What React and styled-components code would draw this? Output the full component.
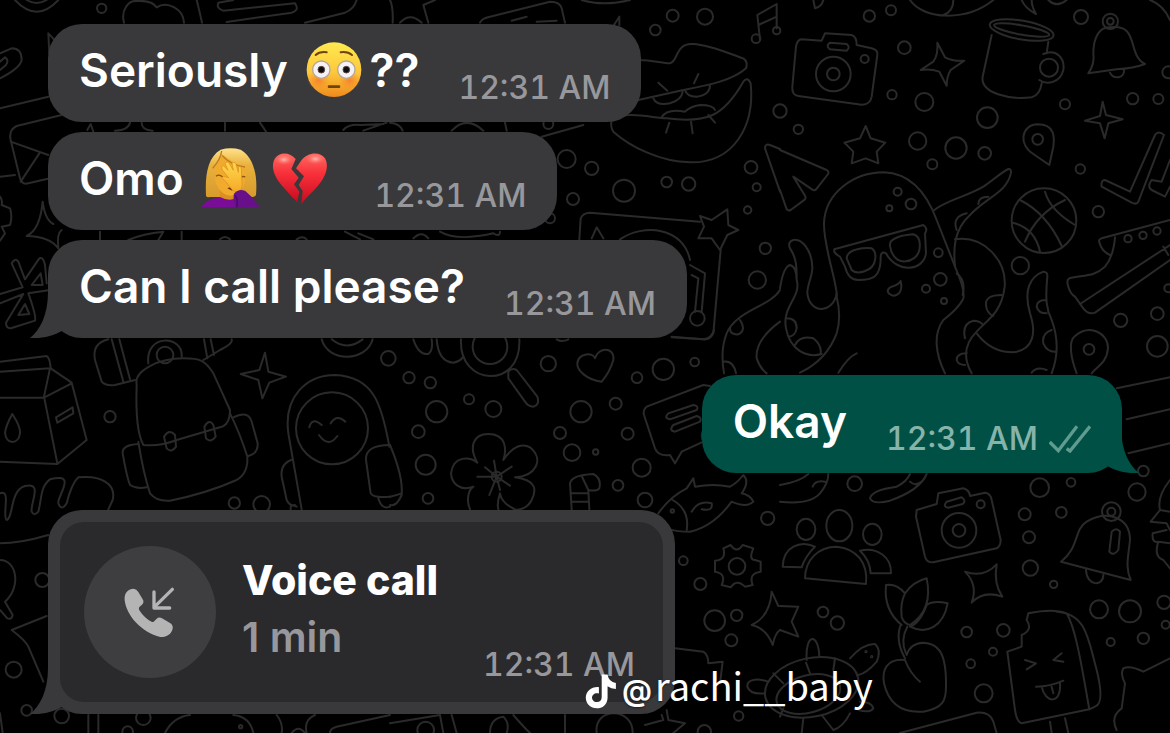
import React from "react";
import styled, { createGlobalStyle } from "styled-components";

const GlobalStyle = createGlobalStyle`
  * { box-sizing: border-box; }
  body { margin: 0; background: #000; }
`;

const sans = `Inter, "Liberation Sans", sans-serif`;

const Screen = styled.main`
  position: relative;
  min-height: 100vh;
  overflow: hidden;
  background: #000;
  font-family: ${sans};
`;

const Wallpaper = styled.svg`
  position: absolute;
  inset: 0;
  width: 100%;
  height: 100%;
  fill: none;
  stroke: #2a2a2a;
  stroke-width: 6;
  stroke-linecap: round;
  stroke-linejoin: round;
`;

const Thread = styled.div`
  position: relative;
  display: flex;
  flex-direction: column;
  gap: 37px;
  padding: 24px 48px 16px;
`;

const Group = styled.section`
  display: flex;
  flex-direction: column;
  align-items: ${(p) => (p.$sent ? "flex-end" : "flex-start")};
  gap: 10px;
`;

const Bubble = styled.article`
  position: relative;
  display: flex;
  gap: 39px;
  max-width: 100%;
  padding: 17px 31px 15px;
  border-radius: 34px;
  background: ${(p) => (p.$sent ? "#005045" : "#39393b")};
  color: ${(p) => (p.$sent ? "#86b3aa" : "#98989c")};
`;

const CallBubble = styled(Bubble)`
  width: 627px;
  padding: 12px;
`;

const Message = styled.p`
  margin: 0;
  min-height: 66px;
  color: #fff;
  font-size: 46px;
  font-weight: 600;
  line-height: 58px;
  white-space: nowrap;
`;

const Meta = styled.div`
  display: flex;
  align-items: center;
  align-self: flex-end;
  gap: 11px;
  margin-left: auto;
`;

const Time = styled.time`
  font-size: 32px;
  font-weight: 500;
  font-variant-numeric: tabular-nums;
  line-height: 38px;
  white-space: nowrap;
`;

const TailShape = styled.svg`
  position: absolute;
  bottom: 0;
  ${(p) => (p.$sent ? "right: -17px; transform: scaleX(-1);" : "left: -18px;")}
  width: 36px;
  height: 50px;
  fill: ${(p) => (p.$sent ? "#005045" : "#39393b")};
`;

const Glyph = styled.svg`
  width: 56px;
  height: 56px;
  margin: 0 7px;
  overflow: visible;
  vertical-align: -11px;
`;

const Ticks = styled.svg`
  width: 42px;
  height: 28px;
  fill: none;
  stroke: #5f9b8f;
  stroke-width: 10;
`;

const CallCard = styled.div`
  position: relative;
  display: flex;
  flex: 1;
  gap: 26px;
  min-height: 180px;
  padding: 24px 28px 18px 24px;
  border-radius: 24px;
  background: #2a2a2c;
`;

const CallBadge = styled.div`
  flex: none;
  width: 132px;
  height: 132px;
  border-radius: 50%;
  background: #3e3e40;
`;

const CallText = styled.div`
  display: flex;
  flex-direction: column;
  gap: 7px;
  padding-top: 9px;
  white-space: nowrap;
`;

const CallTitle = styled.h2`
  margin: 0;
  color: #fff;
  font-size: 41px;
  font-weight: 800;
  line-height: 50px;
`;

const CallLength = styled.p`
  margin: 0;
  font-size: 41px;
  font-weight: 600;
  line-height: 50px;
`;

const Watermark = styled.div`
  position: absolute;
  left: 50%;
  bottom: 15px;
  display: flex;
  align-items: center;
  gap: 5px;
  color: #fff;
  font-family: "Noto Sans CJK SC", "Noto Sans", sans-serif;
  font-size: 38px;
  line-height: 56px;
  white-space: nowrap;
  text-shadow: 0 1px 2px rgba(0, 0, 0, 0.5);
`;

const At = styled.span`
  margin-right: 3px;
  font-family: ${sans};
  font-size: 30px;
  font-weight: 600;
`;

const TikTok = styled.svg`
  width: 32px;
  height: 36px;
  margin-top: 6px;
  fill: #fff;
`;

/* Wallpaper doodles: each tile has its origin, its circles [x, y, r] and its outlines. */
const tiles = [
  {
    x: 0,
    y: 0,
    circles: [[305, 25, 14]],
    paths: [
      "M45 0Q110 70 175 0M80 0Q110 18 140 0",
      "M372 68C362 30 385 0 412 3Q455 0 470 22C500 2 550 25 552 68",
      "M590 0Q600 40 606 68",
      "M885 10Q900 30 875 38L680 66M885 10L670 32Q648 25 655 8L700 0",
      "M915 68L1035 38Q1062 28 1070 0",
      "M0 160L35 145Q65 145 65 180Q60 205 0 235M0 185L15 172Q28 180 18 195L0 210",
      "M168 125L145 100L148 160M0 325L145 290",
      "M185 345L50 378Q25 390 32 420L60 535Q65 555 85 550L150 535M32 425L145 465M62 545L118 460M0 530L45 525",
      "M262 390L272 372L280 395M345 392Q385 390 390 368M425 368Q425 390 458 392M675 368V392M780 368L798 395M1030 390Q1045 372 1080 375L1150 372M1090 392L1160 368",
      "M0 590Q8 600 5 615L30 625Q38 650 30 675L5 680L15 700L0 722",
      "M160 672Q135 660 128 605Q120 690 80 708Q150 710 175 745Q170 700 185 690",
      "M300 695V720M385 720Q430 700 490 695L475 720M545 695V718M660 718q15-14 30 0M890 718q18-12 30 0M1035 695L1080 718M1075 700L1120 718",
      "M0 882L68 862L35 790Q45 772 55 785L75 838L118 775Q130 770 135 795L140 850M0 910L70 882L18 968Q18 988 35 984L105 962Q110 950 85 880L150 870M95 855L122 820L128 855ZM55 945L75 912L88 942Z",
    ],
  },
  {
    x: 390,
    y: 0,
    circles: [[848, 47, 18], [945, 50, 24], [796, 90, 16], [530, 477, 27], [605, 505, 20], [702, 572, 33], [549, 597, 18], [830, 546, 16], [896, 552, 20], [1083, 502, 19], [1100, 562, 12], [1073, 630, 11], [1126, 745, 17], [1102, 840, 26], [480, 655, 15], [475, 372, 15], [922, 955, 22], [1098, 116, 13], [1160, 92, 11]],
    paths: [
      "M8 68Q10 20 0 0M30 68Q60 35 95 68M115 68L100 15L135 0",
      "M270 68Q275 55 300 50L480 5Q510 5 515 25L525 68M365 62L410 50M440 65L500 62M575 0Q640 20 720 0M670 78L688 50V75",
      "M1110 118L1102 45L1160 12V85M1105 75L1160 50",
      "M745 180C790 180 815 190 840 190C865 185 855 128 910 132C960 135 1010 158 1060 175Q1075 185 1068 205C1030 240 960 255 880 270L745 300",
      "M790 295Q800 318 840 310Q875 300 878 275M885 270Q890 290 920 290Q960 285 960 255M805 248L832 272M925 222L912 250",
      "M665 360C710 330 790 355 830 355C950 370 1000 350 1060 245Q1072 228 1082 250C1095 380 1030 490 900 487C810 485 720 440 670 395Q660 380 665 360M815 352Q830 325 885 335Q900 320 930 315Q970 315 975 330M838 368L828 398M903 365L908 400M955 345L975 368",
      "M455 410L580 375M185 392Q230 345 280 392M0 368Q30 370 38 392M345 368L350 392",
      "M1170 575L1125 445Q1125 430 1140 435L1170 447",
      "M568 718L572 655Q580 638 600 638L930 665M605 715L620 682L640 715M690 718C760 670 880 680 900 780M992 750L970 1000Q960 1020 940 1018L845 1010M900 795L945 820L935 935M905 825L925 835L915 935",
      "M930 648L965 660L1012 628L1015 675L1045 690L1012 705L990 750L965 715L925 715L942 680Z",
      "M150 695Q200 725 310 700Q330 712 330 695M70 715q25-25 45 0",
      "M1170 870C1140 920 1040 930 1010 1000Q990 1050 1002 1120M1020 985Q1020 1005 1045 1003Q1070 990 1050 960M1170 965Q1095 1020 1100 1075Q1110 1105 1130 1120M1000 1085Q1030 1080 1038 1120",
    ],
  },
  {
    x: 780,
    y: 0,
    circles: [[268, 48, 17], [333, 31, 15], [373, 143, 19], [336, 284, 14], [433, 306, 27], [622, 353, 31], [413, 423, 26], [528, 444, 32], [614, 460, 19], [457, 493, 15], [55, 388, 14], [0, 333, 20], [353, 575, 12], [393, 612, 16], [328, 625, 9], [475, 758, 13], [481, 838, 19], [438, 866, 12], [492, 903, 9], [903, 51, 21], [855, 313, 15], [1058, 296, 17], [1135, 297, 15], [1165, 217, 18], [901, 507, 14], [955, 635, 17], [721, 797, 26], [1022, 961, 20], [1132, 941, 19], [1132, 1039, 31], [1165, 865, 12], [792, 662, 97], [160, 222, 52], [160, 222, 19], [254, 177, 12], [991, 64, 23], [991, 64, 10], [773, 418, 16], [927, 1048, 16], [807, 203, 27], [1044, 716, 11], [1089, 706, 11], [1131, 693, 11]],
    ellipses: [[725, 90, 97, 28, 10], [725, 90, 84, 14, 10]],
    paths: [
      "M100 0L105 25Q125 20 130 0M390 0C430 60 560 65 640 0M520 0Q520 35 490 45M725 0Q735 25 768 42Q755 20 755 0M805 0Q830 25 860 0M1110 0Q1150 15 1170 60",
      "M65 118L125 122L135 100L215 105Q230 110 230 135L275 145Q295 150 292 165L275 290Q270 315 245 314L55 288Q35 285 37 260L48 140Q52 118 65 118ZM150 128L200 132Q212 142 200 152L150 148Q136 138 150 128Z",
      "M472 128L495 172Q520 185 553 182L512 210Q500 230 500 257L478 215Q450 205 422 210L460 185Q475 165 472 128Z",
      "M635 105L608 230C600 280 690 300 755 292Q780 285 785 250M805 125L800 160M790 162C830 145 855 175 850 210C840 250 800 255 778 240",
      "M925 220Q945 190 940 160C940 110 960 80 990 82C1080 70 1040 165 1095 192Q1060 205 1010 208ZM990 218C1000 240 1035 235 1032 210",
      "M968 305L978 345L1028 358L985 370L974 415L960 370L915 362L960 348Z",
      "M257 378L272 415L316 428L290 455L295 490L257 475L215 490L220 455L193 428L240 415Z",
      "M0 450L140 510Q150 516 142 525L110 566Q104 575 96 568L40 530L75 587Q80 596 70 602L32 630Q22 635 18 622L0 570",
      "M808 495L760 462C715 435 722 375 773 373C830 373 822 420 820 440Z",
      "M965 560Q962 540 975 540L1050 575L1125 405Q1135 390 1152 405L1075 605Q1070 615 1055 608ZM1170 480L1145 545L1115 540Q1100 560 1115 570L1155 590L1170 560",
      "M170 890C175 860 130 740 132 670C135 580 220 517 312 517C390 520 440 580 470 660L525 800Q560 880 548 900Q530 930 490 960C460 1000 465 1060 495 1120M170 890Q185 950 170 1000Q140 1080 60 1118",
      "M170 880C160 940 90 945 82 880C82 850 98 830 97 800C95 750 65 715 40 720Q22 725 30 745C50 775 50 800 50 840C65 890 5 920 18 985C30 1050 80 1075 125 1062M0 865Q10 800 30 795Q50 800 50 840M20 955Q50 955 50 985Q45 1010 25 1010M45 1035Q60 1005 100 1015Q125 1035 122 1060",
      "M463 630C500 600 560 590 610 560C640 540 660 520 685 507Q694 506 693 518C680 580 620 590 570 645C520 690 520 750 525 800M525 718C610 705 680 780 674 860C665 940 620 960 590 995Q535 1050 575 1120",
      "M530 690Q515 650 560 640M595 612Q595 590 625 590M530 820Q558 840 548 885M665 885Q615 885 618 915Q620 940 640 948M555 1015Q545 970 580 962Q600 962 610 975M560 1060Q530 1060 530 1080Q535 1095 555 1095",
      "M590 1000C620 1040 660 1057 700 1057C760 1050 770 1000 750 940C730 870 750 830 790 815Q803 815 802 830C795 900 800 930 815 960Q845 1040 815 1120M798 900Q770 900 770 920Q775 940 800 940M815 990Q785 1000 790 1030Q800 1055 825 1055M175 1118Q205 1070 230 1060M755 1118Q770 1098 800 1110",
      "M163 748L430 675Q445 685 435 700L438 760C430 815 350 820 318 760Q300 750 302 780C300 830 280 840 235 840Q205 840 195 800L180 770Q160 760 163 748M200 775C200 745 260 742 275 745Q290 755 285 780C280 815 230 825 215 810ZM330 738C325 710 380 705 400 703Q425 710 418 750C410 790 340 805 330 738Z",
      "M362 843C370 880 350 887 340 887C315 880 322 865 335 860Q355 855 362 843",
      "M720 600Q800 640 845 738M795 575Q810 630 885 675M855 600Q770 640 735 725M698 668Q765 685 780 755",
      "M1170 660L965 715Q955 718 958 727Q965 755 990 765M1005 712Q1000 770 975 800C945 830 910 825 868 835Q858 840 865 860Q870 880 885 890L910 925Q925 945 945 938L1170 780M900 912L1170 735M1150 740L1165 765",
      "M890 1120C875 1080 862 1025 885 1008C930 970 985 1000 984 1045C980 1090 950 1100 935 1120",
    ],
  },
  {
    x: 0,
    y: 330,
    circles: [[330, 260, 17], [703, 519, 17], [785, 523, 25], [127, 750, 21], [41, 1019, 24], [80, 1141, 16], [185, 1158, 22], [430, 1163, 22], [996, 295, 108], [1165, 85, 22], [495, 75, 25], [383, 1205, 16], [722, 1190, 5]],
    paths: [
      "M0 95L140 78Q150 85 152 115L215 158L260 330L172 402L0 395M0 125L150 115L132 200L172 400M0 203L132 203L215 160M37 252Q62 290 60 310C55 345 18 345 15 308Q18 285 37 252M168 262L218 232L220 250L172 278Z",
      "M410 165C400 120 480 85 550 85C600 85 615 90 640 130L690 240Q690 285 660 292L530 330Q480 350 430 345Q405 300 410 165M415 335Q430 430 450 490Q470 515 510 512Q620 490 710 450Q745 430 742 380Q720 310 690 250",
      "M415 342Q365 345 368 370Q380 440 390 465Q410 478 440 472M700 262Q745 240 755 275L773 340Q775 370 745 378M492 320Q508 295 525 315L528 350Q515 370 500 355ZM613 290Q628 265 640 285L647 320Q632 340 618 325ZM445 100C435 10 550 15 545 80",
      "M325 28Q275 40 285 90L305 155Q315 168 345 165L405 150M335 28L370 155M358 28L390 148M612 28L622 85M632 28L642 75M695 28Q700 40 660 60L610 90",
      "M795 68L805 125L858 140L808 158L787 205L775 150L722 132L778 120Z",
      "M965 28C985 100 1100 95 1118 28M995 28Q1040 65 1088 28",
      "M905 538L865 310C850 200 920 135 1005 135C1120 140 1145 220 1168 350M928 292Q935 260 965 285M992 280Q1010 250 1036 275M957 315Q985 355 1012 318M878 388Q840 400 845 440L860 510Q870 530 885 525M872 538Q870 520 890 530M1170 345Q1095 345 1098 390L1112 490Q1120 505 1170 500M1135 505Q1145 540 1170 530",
      "M0 490C35 475 5 560 20 570C40 565 30 480 75 468C130 455 90 520 95 545Q102 560 115 545C125 510 120 470 150 448C235 425 170 500 175 520Q185 545 200 520Q215 460 235 442C300 435 350 460 338 510L325 538",
      "M0 640Q60 640 145 615M0 690C50 690 65 770 15 815L38 855Q35 870 22 865L0 840M140 858L35 900Q75 930 85 950L130 1055",
      "M0 1150L8 1209M265 1155V1209M295 1155V1209M495 1209Q520 1160 570 1155M700 1155Q750 1160 760 1209M830 1155Q850 1180 845 1209M945 1155Q910 1170 920 1209M875 1209q20-25 40 0M990 1209Q990 1195 1010 1190L1170 1155",
    ],
  },
  {
    x: 390,
    y: 330,
    circles: [[57, 143, 17], [121, 158, 17], [237, 208, 15], [140, 245, 32], [310, 237, 24], [85, 305, 19], [107, 404, 30], [114, 505, 16], [475, 101, 23], [741, 143, 16], [820, 118, 32], [914, 96, 13], [573, 245, 32], [677, 221, 18], [510, 309, 18], [713, 311, 18], [546, 368, 25], [617, 366, 8], [755, 413, 27], [684, 466, 16], [765, 510, 22], [1133, 565, 20], [880, 692, 13], [931, 762, 18], [1041, 709, 25], [974, 872, 31], [1040, 856, 17], [1024, 931, 18], [1046, 1158, 14], [300, 50, 52], [847, 543, 5], [107, 1200, 25], [943, 1205, 20], [320, 440, 15]],
    paths: [
      "M213 28C205 170 395 180 388 28M355 125Q365 112 380 120L442 200Q450 225 430 230Q415 230 405 215L355 145ZM140 28Q145 95 190 98Q210 95 220 80M70 28Q85 75 115 72Q130 60 125 28",
      "M635 155C590 150 560 120 562 100C565 70 610 65 615 85C625 50 675 50 670 90Q660 125 635 155M500 28Q515 38 535 28M845 22L940 28Q965 25 972 0",
      "M960 168L940 165L770 230Q758 240 762 255L795 355Q805 380 840 375L855 400L875 365L940 335M835 250L910 225Q928 228 920 240L840 268Q820 265 835 250ZM850 285L920 258Q937 262 930 275L855 305Q835 302 850 285ZM940 300Q930 315 940 335",
      "M240 538C228 510 235 480 250 470C210 485 185 460 183 430C190 375 240 380 262 398C235 350 250 312 295 312C350 312 350 360 340 390C370 345 400 340 420 352C465 390 435 440 375 442C440 450 440 480 425 510C410 540 380 540 375 538Q335 520 330 490Q320 520 325 538",
      "M320 440H262M320 440L365 410M320 440L312 392M320 440L360 467M320 440L298 495M320 440L330 480M320 440L285 412",
      "M545 538L540 460Q545 435 610 432Q635 445 628 475Q620 485 595 480L598 538M545 490H595M545 515H595M575 438L595 480",
      "M805 550Q840 500 890 475L910 445L915 470Q970 460 1020 470Q1040 460 1060 435Q1080 455 1055 490Q1080 495 1090 515Q1070 535 1025 515Q970 590 900 605Q860 605 840 598M848 510Q900 540 890 600M905 545Q925 510 965 520Q970 545 935 538",
      "M1000 655L1022 645Q1040 672 1058 645L1090 655Q1075 690 1095 690L1112 695V725Q1075 730 1088 765L1065 770Q1040 745 1022 772L995 765Q1010 730 975 725V692Q1010 690 1000 655Z",
      "M1165 828L1145 785Q1140 860 1085 885Q1130 895 1148 945Q1155 910 1170 900M855 955L940 965Q955 975 955 1000L998 995L990 1060",
      "M1135 1055C1090 1040 1070 1055 1072 1070Q1080 1095 1125 1090",
      "M0 1180L150 1155L160 1209M185 1155L200 1209M300 1209Q300 1165 340 1160Q360 1180 350 1209M370 1155Q400 1190 420 1209M525 1155V1209M620 1209C610 1130 730 1130 728 1209M815 1155L820 1170L765 1185M830 1140L835 1170L885 1180L850 1209",
      "M0 345Q40 440 35 495Q20 530 0 525M0 500Q20 495 35 490",
    ],
  },
  {
    x: 780,
    y: 330,
    circles: [[224, 461, 22], [779, 473, 28], [873, 457, 13], [1071, 486, 26], [1090, 423, 16], [734, 553, 18], [844, 547, 16], [747, 622, 18], [751, 714, 23], [821, 763, 11], [602, 523, 12], [537, 601, 52], [537, 601, 19], [994, 545, 28], [994, 545, 12], [957, 838, 27], [1050, 844, 33], [1152, 817, 20], [1157, 884, 12], [1090, 925, 17], [992, 936, 12], [129, 846, 16], [172, 879, 20], [560, 906, 16], [670, 901, 19], [639, 965, 12], [572, 1001, 13], [611, 1090, 27], [258, 965, 2], [275, 980, 2]],
    ellipses: [[78, 598, 28, 32, 0], [178, 587, 39, 47, 0], [277, 613, 28, 32, 0], [95, 1072, 142, 88, -12], [85, 1092, 98, 56, -15]],
    paths: [
      "M1010 175L1170 142M1040 268L1170 238M1045 370L1170 340",
      "M0 515Q90 525 120 490Q145 460 145 432M0 465Q60 455 85 432M98 470Q105 450 135 455M270 505Q275 480 350 470Q380 455 390 432M270 505Q280 525 330 512Q420 480 440 432M390 455Q405 470 425 455",
      "M75 745C75 690 115 650 170 650C230 655 265 700 258 762ZM65 712L8 710C10 650 60 630 105 650Q75 680 65 712M240 662C290 650 335 680 333 730L272 730Q270 690 240 662",
      "M410 540L470 522L475 490L550 475Q568 480 570 498L615 488Q632 490 635 510L662 630Q662 648 650 655L460 697Q440 698 435 680L408 560ZM500 515L545 502Q560 512 548 522L505 533Q487 530 500 515",
      "M843 695C900 650 880 600 920 575C980 540 1050 560 1050 630C1045 680 1035 710 1052 750ZM918 720C920 770 970 770 970 735M995 605Q1010 590 1020 605L1015 660Q1000 680 988 665Z",
      "M1170 450Q1130 500 1140 540L1170 545M1140 540L1112 575L1160 580L1170 600M1160 600L1118 610Q1115 640 1135 635L1170 640M1135 635Q1120 680 1150 690L1170 715",
      "M650 703Q640 760 667 800Q610 780 575 818Q595 765 555 725Q610 745 650 703",
      "M365 885Q310 840 318 765Q350 760 375 790Q400 755 440 745Q460 840 390 885Q370 880 365 860Q360 820 375 790M440 825Q460 810 503 820C490 890 440 915 390 890Q420 880 440 825M362 885Q345 930 375 985M382 890Q360 930 378 970",
      "M420 1055Q390 1030 375 990C320 985 305 1020 312 1060C330 1140 390 1148 430 1145C490 1135 498 1110 498 1070C500 960 470 940 430 938Q390 940 380 975",
      "M0 828L55 830L35 875L55 920L0 900",
      "M745 850Q820 835 860 850C890 900 910 1040 928 1138L725 1180Q710 1175 705 1140L682 965L725 950V915Q760 900 740 870ZM830 845C920 850 925 930 950 1020Q975 1120 945 1130L928 1138M810 1175L815 1209M855 1165L865 1209M735 990L768 1000L740 1018M845 970L820 990L850 995M768 1070Q810 1070 850 1052M785 1070C795 1120 845 1125 840 1060M815 1070L820 1090",
      "M1170 985L1090 1025Q1050 1005 1030 1015Q1020 1030 1035 1060L1025 1135Q990 1160 1010 1200",
      "M210 985Q250 940 285 942Q305 960 290 995Q260 1030 235 1035M80 990C75 910 115 905 118 980M78 998L90 1030M165 985L160 1020M70 1165L65 1209M125 1155L160 1200Q190 1190 210 1150M240 1115Q275 1115 280 1135Q270 1150 235 1140M-20 1030L10 1060M0 1160L10 1135",
      "M360 1209L590 1148Q630 1145 640 1175L650 1209",
    ],
  },
];

const Doodles = () => (
  <Wallpaper viewBox="0 0 1170 733" preserveAspectRatio="xMidYMid slice" aria-hidden="true">
    {tiles.map((tile, i) => (
      <g key={i} transform={`translate(${tile.x} ${tile.y}) scale(${1 / 3})`}>
        {tile.circles.map(([cx, cy, r], k) => (
          <circle key={k} cx={cx} cy={cy} r={r} />
        ))}
        {(tile.ellipses || []).map(([cx, cy, rx, ry, a], k) => (
          <ellipse key={k} cx={cx} cy={cy} rx={rx} ry={ry} transform={`rotate(${a} ${cx} ${cy})`} />
        ))}
        {tile.paths.map((d, k) => (
          <path key={k} d={d} />
        ))}
      </g>
    ))}
  </Wallpaper>
);

const Tail = ({ sent }) => (
  <TailShape $sent={sent} viewBox="0 0 36 50" aria-hidden="true">
    <path d="M18 4C18 27 10 42 0 50C14 51 26 47 35 41L35 4Z" />
  </TailShape>
);

const FlushedFace = () => (
  <Glyph viewBox="349 35 168 168" role="img" aria-label="😳">
    <defs>
      <linearGradient id="skin" x1="0" y1="0" x2="0" y2="1">
        <stop offset="0" stopColor="#ffe94f" />
        <stop offset="0.55" stopColor="#fdc83c" />
        <stop offset="1" stopColor="#ee8a1c" />
      </linearGradient>
      <radialGradient id="blush">
        <stop offset="0" stopColor="#f4612a" stopOpacity="0.6" />
        <stop offset="1" stopColor="#f4812a" stopOpacity="0" />
      </radialGradient>
    </defs>
    <circle cx="433" cy="118" r="82" fill="url(#skin)" />
    <ellipse cx="386" cy="150" rx="34" ry="28" fill="url(#blush)" />
    <ellipse cx="480" cy="150" rx="34" ry="28" fill="url(#blush)" />
    <g fill="#f4f2f4" stroke="#b5a59b" strokeWidth="4">
      <circle cx="395" cy="118" r="26" />
      <circle cx="470" cy="118" r="26" />
    </g>
    <g fill="#120c0c" stroke="#574a48" strokeWidth="3">
      <circle cx="395" cy="118" r="10" />
      <circle cx="470" cy="118" r="10" />
    </g>
    <g fill="none" stroke="#70440f" strokeWidth="6" strokeLinecap="round">
      <path d="M378 74Q390 63 411 66M453 66Q474 63 487 74" />
      <path d="M418 169H448" strokeWidth="8" />
    </g>
  </Glyph>
);

const Facepalm = () => (
  <Glyph viewBox="36 363 168 168" role="img" aria-label="🤦‍♀️">
    <defs>
      <linearGradient id="hair" x1="0" y1="0" x2="0" y2="1">
        <stop offset="0" stopColor="#ffe28a" />
        <stop offset="0.35" stopColor="#e9b13c" />
        <stop offset="1" stopColor="#d79a2c" />
      </linearGradient>
      <linearGradient id="hand" x1="0" y1="0" x2="0" y2="1">
        <stop offset="0" stopColor="#ffd84e" />
        <stop offset="1" stopColor="#f5a927" />
      </linearGradient>
    </defs>
    <path d="M48 500C45 440 52 385 92 362Q122 354 152 362C192 385 203 440 198 498Q195 505 180 504H60Q50 506 48 500Z" fill="url(#hair)" />
    <path d="M90 475H150V520H90Z" fill="#dd8e20" />
    <path d="M94 375C75 405 70 440 78 465Q95 500 122 500C155 495 172 460 168 420Q145 410 94 375Z" fill="#f0aa2e" />
    <path d="M95 366Q92 390 68 418M97 380Q120 408 165 414" fill="none" stroke="#b97b20" strokeWidth="4" />
    <path d="M78 442Q87 434 98 444M152 446Q158 440 166 444" fill="none" stroke="#8a5312" strokeWidth="4" />
    <path d="M112 478Q122 470 128 486" fill="#70300c" />
    <path d="M34 535Q45 512 90 504Q120 520 145 504Q200 512 207 535Z" fill="#7a0d98" />
    <path d="M98 424Q92 410 100 410L114 424L106 404Q112 394 118 404L130 424L126 402Q134 396 138 406L145 430L146 412Q154 410 154 420L156 462Q158 480 146 488L130 486Q112 464 108 458Q92 446 100 442L116 446Z" fill="url(#hand)" stroke="#d98c1e" strokeWidth="2" />
    <path d="M132 494Q146 478 166 486Q195 510 207 535H136Q128 515 132 494Z" fill="#68108a" />
    <path d="M140 535Q146 512 134 498" fill="none" stroke="#490868" strokeWidth="4" />
  </Glyph>
);

const BrokenHeart = () => (
  <Glyph viewBox="246 363 168 168" role="img" aria-label="💔">
    <defs>
      <linearGradient id="heart" x1="0" y1="0" x2="0" y2="1">
        <stop offset="0" stopColor="#ff6a62" />
        <stop offset="0.4" stopColor="#f8303a" />
        <stop offset="1" stopColor="#c80b20" />
      </linearGradient>
      <radialGradient id="shine">
        <stop offset="0" stopColor="#ffc9bd" stopOpacity="0.85" />
        <stop offset="1" stopColor="#ff7a70" stopOpacity="0" />
      </radialGradient>
    </defs>
    <path d="M317 390C300 368 268 368 255 388C237 420 262 456 285 480Q302 500 321 519L328 488L312 466L326 446L304 420Z" fill="url(#heart)" />
    <path d="M333 396C350 370 390 365 405 388C422 420 398 458 372 484Q352 502 334 525L338 486L326 468L342 442L318 418Z" fill="url(#heart)" />
    <ellipse cx="282" cy="392" rx="26" ry="16" fill="url(#shine)" />
    <ellipse cx="376" cy="390" rx="28" ry="16" fill="url(#shine)" />
  </Glyph>
);

const App = () => (
  <Screen>
    <GlobalStyle />
    <Doodles />
    <Thread>
      <Group>
        <Bubble>
          <Message>
            Seriously <FlushedFace />??
          </Message>
          <Meta>
            <Time>12:31 AM</Time>
          </Meta>
        </Bubble>
        <Bubble>
          <Message>
            Omo <Facepalm />
            <BrokenHeart />
          </Message>
          <Meta>
            <Time>12:31 AM</Time>
          </Meta>
        </Bubble>
        <Bubble>
          <Tail />
          <Message>Can I call please?</Message>
          <Meta>
            <Time>12:31 AM</Time>
          </Meta>
        </Bubble>
      </Group>
      <Group $sent>
        <Bubble $sent>
          <Tail sent />
          <Message>Okay</Message>
          <Meta>
            <Time>12:31 AM</Time>
            <Ticks viewBox="808 283 126 84" role="img" aria-label="Delivered">
              <path d="M810 334L836 360L892 287M861 354L871 361L931 287" />
            </Ticks>
          </Meta>
        </Bubble>
      </Group>
      <Group>
        <CallBubble>
          <Tail />
          <CallCard>
            <CallBadge>
              <svg viewBox="192 138 396 396" width="132" height="132" aria-hidden="true">
                <path
                  d="M314 300C312 278 325 266 341 266Q350 267 355 276L368 298Q374 308 365 315L358 321Q355 325 358 331C368 347 382 360 396 366Q401 367 404 362L410 356Q417 350 426 355L450 369Q460 375 458 386C454 402 440 412 421 411C365 398 318 345 314 300Z"
                  fill="#b4b4b5"
                />
                <path
                  d="M457 268L402 322M402 276V324H449"
                  fill="none"
                  stroke="#b4b4b5"
                  strokeWidth="10"
                  strokeLinecap="round"
                  strokeLinejoin="round"
                />
              </svg>
            </CallBadge>
            <CallText>
              <CallTitle>Voice call</CallTitle>
              <CallLength>1 min</CallLength>
            </CallText>
            <Meta>
              <Time>12:31 AM</Time>
            </Meta>
          </CallCard>
        </CallBubble>
      </Group>
    </Thread>
    <Watermark>
      <TikTok viewBox="49 108 92 104" role="img" aria-label="TikTok">
        <path d="M97 112H114Q117 133 138 137V154Q124 153 114 146V180C113 200 99 210 83 210C65 210 51 197 51 179C52 160 68 147 89 149V167C77 164 69 171 69 180C70 188 76 192 83 192C92 192 97 186 97 178Z" />
      </TikTok>
      <span>
        <At>@</At>rachi__baby
      </span>
    </Watermark>
  </Screen>
);

export default App;
